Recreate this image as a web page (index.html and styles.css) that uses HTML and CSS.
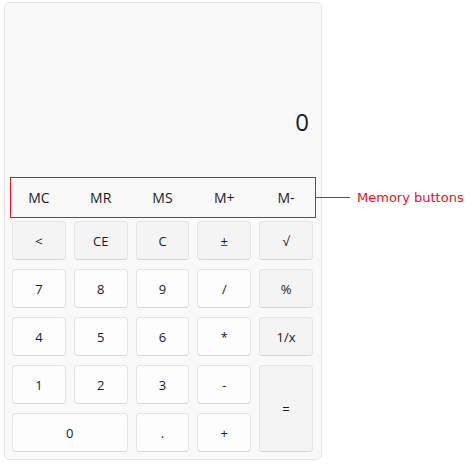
FILE: index.html
```html
<!DOCTYPE html>
<html>
<head>
<meta charset="utf-8">
<link rel="stylesheet" href="styles.css">
</head>
<body>
<div class="calc">
  <div class="display"><span class="value">0</span></div>
  <div class="memory">
    <button class="mem">MC</button>
    <button class="mem">MR</button>
    <button class="mem">MS</button>
    <button class="mem">M+</button>
    <button class="mem">M-</button>
    <div class="callout"><span class="line"></span><span class="label">Memory buttons</span></div>
  </div>
  <div class="keys">
    <button class="key op">&lt;</button>
    <button class="key op">CE</button>
    <button class="key op">C</button>
    <button class="key op">±</button>
    <button class="key op">√</button>
    <button class="key">7</button>
    <button class="key">8</button>
    <button class="key">9</button>
    <button class="key">/</button>
    <button class="key op">%</button>
    <button class="key">4</button>
    <button class="key">5</button>
    <button class="key">6</button>
    <button class="key">*</button>
    <button class="key op">1/x</button>
    <button class="key">1</button>
    <button class="key">2</button>
    <button class="key">3</button>
    <button class="key">-</button>
    <button class="key op equals">=</button>
    <button class="key zero">0</button>
    <button class="key">.</button>
    <button class="key">+</button>
  </div>
</div>
</body>
</html>
```
FILE: styles.css
```css
* { box-sizing: border-box; }
html, body { margin: 0; background: #ffffff; }
body {
  padding: 2px 0 0 4px;
  font-family: "Open Sans", "Noto Sans", sans-serif;
  color: #1b1b1b;
}
.calc {
  width: 318px;
  height: 458px;
  background: #f9f9f9;
  border: 1px solid #e6e6e6;
  border-radius: 5px;
  padding: 0 8px 7px 7px;
  display: flex;
  flex-direction: column;
}
.display {
  height: 174px;
  display: flex;
  align-items: flex-end;
  justify-content: flex-end;
  padding: 0 4px 39px 0;
}
.value {
  font-size: 24px;
  line-height: 32px;
  color: #1b1b1b;
}
.memory {
  position: relative;
  height: 41px;
  display: grid;
  grid-template-columns: repeat(5, 1fr);
  column-gap: 8px;
}
.memory::after {
  content: "";
  position: absolute;
  left: -2px;
  right: -3px;
  top: 0;
  bottom: 0;
  border: 1px solid #e81123;
  pointer-events: none;
}
.mem {
  border: none;
  background: transparent;
  font-family: inherit;
  font-size: 14px;
  color: #1b1b1b;
  padding: 0;
}
.callout {
  position: absolute;
  left: calc(100% + 3px);
  top: 0;
  bottom: 0;
  display: flex;
  align-items: center;
  gap: 7px;
  white-space: nowrap;
}
.line {
  width: 34px;
  height: 1px;
  background: #e81123;
}
.label {
  font-family: "DejaVu Sans", sans-serif;
  font-size: 13px;
  color: #e81123;
}
.keys {
  margin-top: 3px;
  display: grid;
  grid-template-columns: repeat(5, 1fr);
  grid-template-rows: repeat(5, 39px);
  column-gap: 8px;
  row-gap: 9px;
}
.key {
  border: 1px solid #e5e5e5;
  border-bottom-color: #d6d6d6;
  border-radius: 4px;
  background: #fdfdfd;
  font-family: inherit;
  font-size: 13px;
  color: #1b1b1b;
  padding: 0;
}
.key.op { background: #f4f4f4; }
.equals { grid-column: 5; grid-row: 4 / span 2; }
.zero { grid-column: span 2; }
```
